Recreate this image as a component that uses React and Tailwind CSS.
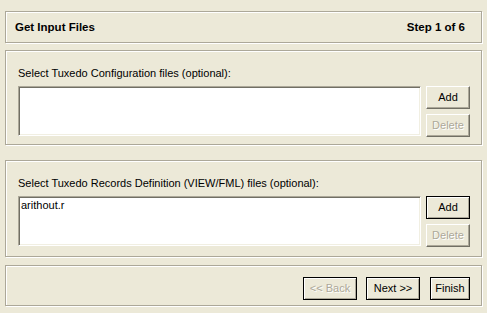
import React from "react";

const font = { fontFamily: '"Liberation Sans", Arial, sans-serif' };

function Panel({ className = "", children }) {
  return (
    <div
      className={`border border-[#aca899] shadow-[inset_1px_1px_0_#fff,1px_1px_0_#fff] ${className}`}
    >
      {children}
    </div>
  );
}

function Button({ children, disabled, framed, className = "" }) {
  const frame = framed
    ? "border border-black shadow-[inset_1px_1px_0_#fff,inset_-1px_-1px_0_#aca899]"
    : "border border-t-white border-l-white border-r-[#716f64] border-b-[#716f64] shadow-[inset_-1px_-1px_0_#aca899]";
  return (
    <button
      disabled={disabled}
      className={`h-[23px] bg-[#ece9d8] text-[11px] leading-none flex items-center justify-center ${frame} ${
        disabled ? "text-[#aca899] [text-shadow:1px_1px_0_#fff]" : "text-black"
      } ${className}`}
    >
      {children}
    </button>
  );
}

function FileList({ label, items, addFramed, height }) {
  return (
    <Panel className={`${height} pl-[12px] pr-[11px] pt-[16px]`}>
      <div className="text-[11px] leading-[13px] text-black">{label}</div>
      <div className="mt-[6px] flex gap-[5px]">
        <div className="flex-1 h-[50px] bg-white border border-t-[#aca899] border-l-[#aca899] border-b-white border-r-white shadow-[inset_1px_1px_0_#716f64,inset_-1px_-1px_0_#f1efe2] pl-[2px] pt-[2px]">
          {items.map((it) => (
            <div key={it} className="text-[11px] leading-[13px] text-black">
              {it}
            </div>
          ))}
        </div>
        <div className="w-[44px] flex flex-col gap-[5px]">
          <Button framed={addFramed}>Add</Button>
          <Button disabled>Delete</Button>
        </div>
      </div>
    </Panel>
  );
}

export default function App() {
  return (
    <div
      style={font}
      className="w-[487px] h-[313px] bg-[#ece9d8] px-[5px] pt-[11px] flex flex-col"
    >
      <Panel className="h-[32px] pl-[9px] pr-[16px] flex items-center justify-between">
        <span className="text-[11.5px] font-bold text-black pt-[1px]">Get Input Files</span>
        <span className="text-[11.5px] font-bold text-black pt-[1px]">Step 1 of 6</span>
      </Panel>

      <div className="mt-[7px]">
        <FileList
          label="Select Tuxedo Configuration files (optional):"
          items={[]}
          height="h-[95px]"
        />
      </div>

      <div className="mt-[15px]">
        <FileList
          label="Select Tuxedo Records Definition (VIEW/FML) files (optional):"
          items={["arithout.r"]}
          addFramed
          height="h-[97px]"
        />
      </div>

      <Panel className="mt-[8px] h-[41px] pt-[11px] pr-[11px] flex justify-end items-start">
        <Button disabled framed className="w-[54px]">
          &lt;&lt; Back
        </Button>
        <Button framed className="w-[54px] ml-[9px]">
          Next &gt;&gt;
        </Button>
        <Button framed className="w-[40px] ml-[10px]">
          Finish
        </Button>
      </Panel>
    </div>
  );
}
